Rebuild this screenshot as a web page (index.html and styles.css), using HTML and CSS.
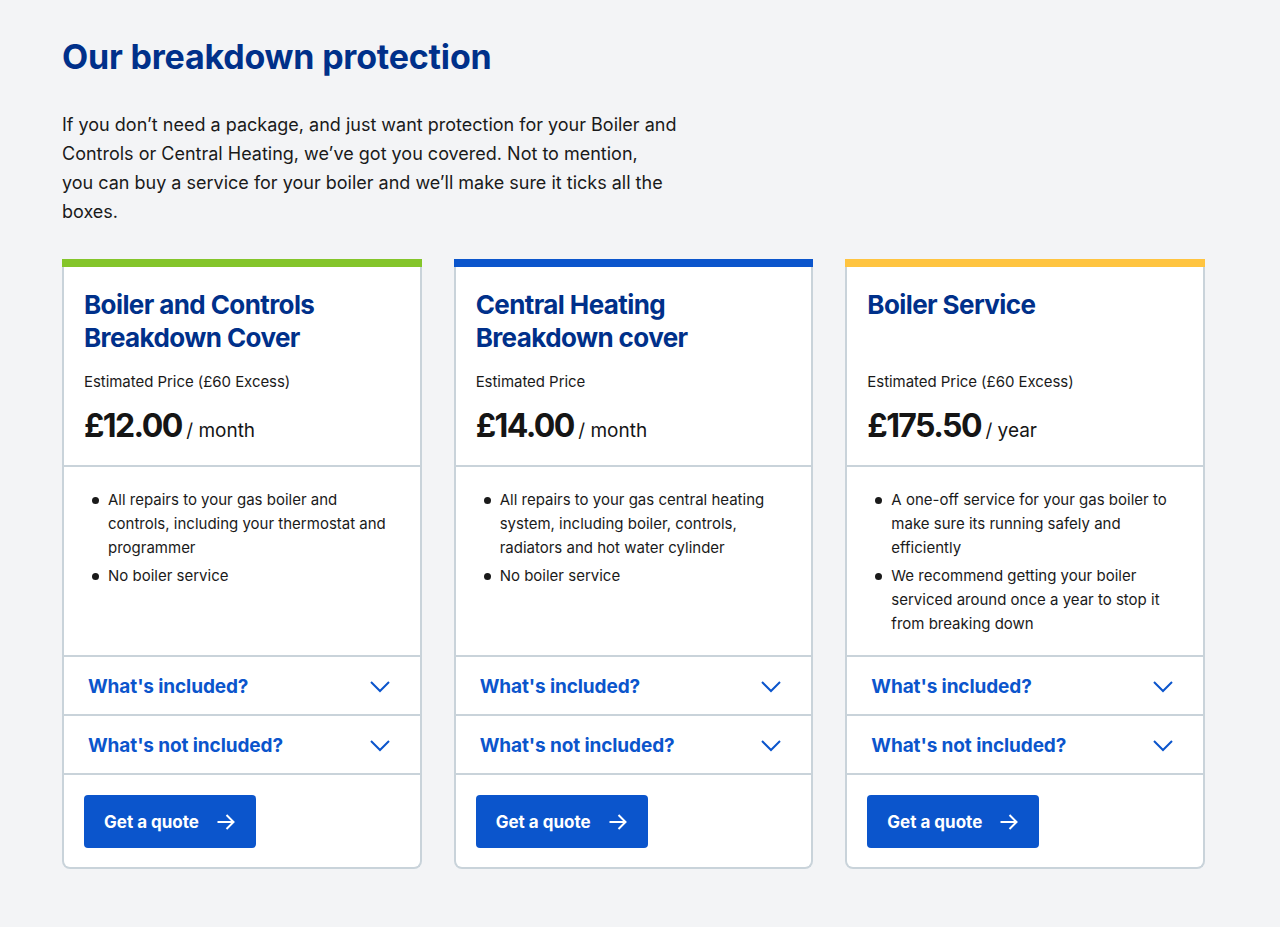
FILE: index.html
```html
<!DOCTYPE html>
<html lang="en">
<head>
<meta charset="utf-8">
<title>Our breakdown protection</title>
<link rel="stylesheet" href="styles.css">
</head>
<body>
<main class="page">
  <h1 class="page-title">Our breakdown protection</h1>
  <p class="intro">If you don’t need a package, and just want protection for your Boiler and Controls or Central Heating, we’ve got you covered. Not to mention,<br> you can buy a service for your boiler and we’ll make sure it ticks all the boxes.</p>

  <div class="cards">
    <article class="card">
      <div class="card-bar bar-green"></div>
      <div class="card-body">
        <div class="card-head">
          <h2 class="card-title">Boiler and Controls Breakdown Cover</h2>
          <p class="est">Estimated Price (£60 Excess)</p>
          <p class="price"><span class="amount">£12.00</span> <span class="per">/ month</span></p>
        </div>
        <ul class="bullets">
          <li>All repairs to your gas boiler and controls, including your thermostat and programmer</li>
          <li>No boiler service</li>
        </ul>
        <div class="acc"><span>What's included?</span><svg class="chev" viewBox="0 0 24 24" width="24" height="24"><path d="M3 8l9 9 9-9" fill="none" stroke="currentColor" stroke-width="2"/></svg></div>
        <div class="acc"><span>What's not included?</span><svg class="chev" viewBox="0 0 24 24" width="24" height="24"><path d="M3 8l9 9 9-9" fill="none" stroke="currentColor" stroke-width="2"/></svg></div>
        <div class="card-foot">
          <a class="btn" href="#">Get a quote<svg class="arrow" viewBox="0 0 20 20" width="20" height="20"><path d="M1.5 10h16M10.5 3l7 7-7 7" fill="none" stroke="currentColor" stroke-width="2"/></svg></a>
        </div>
      </div>
    </article>

    <article class="card">
      <div class="card-bar bar-blue"></div>
      <div class="card-body">
        <div class="card-head">
          <h2 class="card-title">Central Heating Breakdown cover</h2>
          <p class="est">Estimated Price</p>
          <p class="price"><span class="amount">£14.00</span> <span class="per">/ month</span></p>
        </div>
        <ul class="bullets">
          <li>All repairs to your gas central heating system, including boiler, controls, radiators and hot water cylinder</li>
          <li>No boiler service</li>
        </ul>
        <div class="acc"><span>What's included?</span><svg class="chev" viewBox="0 0 24 24" width="24" height="24"><path d="M3 8l9 9 9-9" fill="none" stroke="currentColor" stroke-width="2"/></svg></div>
        <div class="acc"><span>What's not included?</span><svg class="chev" viewBox="0 0 24 24" width="24" height="24"><path d="M3 8l9 9 9-9" fill="none" stroke="currentColor" stroke-width="2"/></svg></div>
        <div class="card-foot">
          <a class="btn" href="#">Get a quote<svg class="arrow" viewBox="0 0 20 20" width="20" height="20"><path d="M1.5 10h16M10.5 3l7 7-7 7" fill="none" stroke="currentColor" stroke-width="2"/></svg></a>
        </div>
      </div>
    </article>

    <article class="card">
      <div class="card-bar bar-yellow"></div>
      <div class="card-body">
        <div class="card-head">
          <h2 class="card-title">Boiler Service</h2>
          <p class="est">Estimated Price (£60 Excess)</p>
          <p class="price"><span class="amount">£175.50</span> <span class="per">/ year</span></p>
        </div>
        <ul class="bullets">
          <li>A one-off service for your gas boiler to make sure its running safely and efficiently</li>
          <li>We recommend getting your boiler serviced around once a year to stop it from breaking down</li>
        </ul>
        <div class="acc"><span>What's included?</span><svg class="chev" viewBox="0 0 24 24" width="24" height="24"><path d="M3 8l9 9 9-9" fill="none" stroke="currentColor" stroke-width="2"/></svg></div>
        <div class="acc"><span>What's not included?</span><svg class="chev" viewBox="0 0 24 24" width="24" height="24"><path d="M3 8l9 9 9-9" fill="none" stroke="currentColor" stroke-width="2"/></svg></div>
        <div class="card-foot">
          <a class="btn" href="#">Get a quote<svg class="arrow" viewBox="0 0 20 20" width="20" height="20"><path d="M1.5 10h16M10.5 3l7 7-7 7" fill="none" stroke="currentColor" stroke-width="2"/></svg></a>
        </div>
      </div>
    </article>
  </div>
</main>
</body>
</html>
```

FILE: styles.css
```css
* { box-sizing: border-box; }

html, body {
  margin: 0;
  padding: 0;
  background: #f3f4f6;
}

body {
  font-family: Inter, "Noto Sans", "Liberation Sans", sans-serif;
  color: #1a1a1a;
}

.page {
  padding: 34px 62px 40px;
  width: 1268px;
}

.page-title {
  margin: 0;
  font-size: 34px;
  line-height: 46px;
  font-weight: 700;
  color: #00308a;
  letter-spacing: -0.2px;
}

.intro {
  margin: 30px 0 0;
  max-width: 622px;
  font-size: 18px;
  line-height: 29px;
  color: #1a1a1a;
  letter-spacing: 0;
}

.cards {
  margin-top: 33px;
  width: 1143px;
  display: grid;
  grid-template-columns: repeat(3, 1fr);
  column-gap: 32px;
  align-items: stretch;
}

.card {
  display: flex;
  flex-direction: column;
}

.card-bar { height: 8px; }
.bar-green { background: #84c52a; }
.bar-blue { background: #0b55cc; }
.bar-yellow { background: #ffc440; }

.card-body {
  flex: 1;
  display: flex;
  flex-direction: column;
  background: #fff;
  border: 2px solid #c9d3da;
  border-top: none;
  border-radius: 0 0 8px 8px;
}

.card-head {
  padding: 21px 20px 14px;
  border-bottom: 2px solid #c9d3da;
}

.card-title {
  margin: 0;
  min-height: 66px;
  font-size: 26px;
  line-height: 33px;
  font-weight: 700;
  color: #00308a;
  letter-spacing: -0.6px;
}

.est {
  margin: 18px 0 0;
  font-size: 15px;
  line-height: 20px;
  letter-spacing: -0.05px;
  color: #1a1a1a;
}

.price {
  margin: 14px 0 0;
  line-height: 40px;
  color: #151515;
}

.amount {
  font-size: 32px;
  font-weight: 700;
  letter-spacing: -1.6px;
}

.per {
  font-size: 19px;
  letter-spacing: 0;
}

.bullets {
  flex: 1;
  margin: 0;
  padding: 21px 28px 15px 44px;
  list-style: none;
  font-size: 15px;
  line-height: 24px;
  letter-spacing: 0;
  color: #1a1a1a;
  border-bottom: 2px solid #c9d3da;
}

.bullets li {
  position: relative;
  margin-bottom: 4px;
}

.bullets li::before {
  content: "";
  position: absolute;
  left: -16px;
  top: 9px;
  width: 7px;
  height: 7px;
  border-radius: 50%;
  background: #1a1a1a;
}

.acc {
  display: flex;
  align-items: center;
  justify-content: space-between;
  height: 59px;
  padding: 1px 28px 0 24px;
  border-bottom: 2px solid #c9d3da;
  font-size: 19px;
  font-weight: 700;
  color: #0b55cc;
  letter-spacing: -0.1px;
}

.chev {
  color: #0b55cc;
  display: block;
}

.card-foot {
  padding: 20px 20px 19px;
}

.btn {
  display: inline-flex;
  align-items: center;
  gap: 17px;
  height: 53px;
  padding: 0 20px;
  background: #0b55cc;
  border-radius: 4px;
  color: #fff;
  text-decoration: none;
  font-size: 17px;
  font-weight: 700;
  letter-spacing: 0;
}

.arrow { display: block; }
```
